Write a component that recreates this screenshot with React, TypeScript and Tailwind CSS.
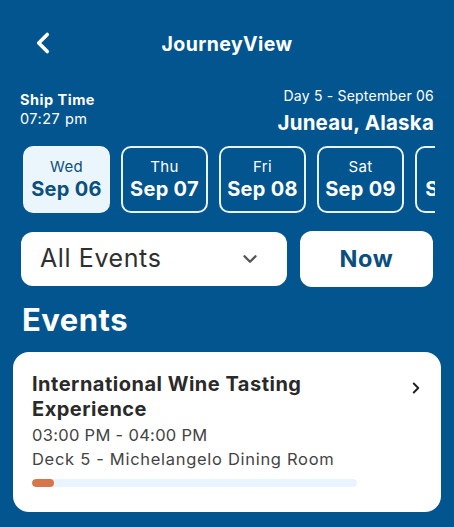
import { ChevronLeft, ChevronDown, ChevronRight } from "lucide-react";

const days = [
  { id: 1, day: "Wed", date: "Sep 06", active: true },
  { id: 2, day: "Thu", date: "Sep 07", active: false },
  { id: 3, day: "Fri", date: "Sep 08", active: false },
  { id: 4, day: "Sat", date: "Sep 09", active: false },
  { id: 5, day: "Sun", date: "Sep 10", active: false },
];

function App() {
  return (
    <div className="w-[454px] h-[527px] overflow-hidden bg-[#03558f] text-white font-['Inter',sans-serif]">
      {/* header */}
      <div className="relative flex items-center justify-center h-[90px]">
        <ChevronLeft className="absolute left-[26px] top-[26px] w-[34px] h-[34px]" strokeWidth={2.6} />
        <h1 className="text-[19.5px] font-bold tracking-[0.4px]">JourneyView</h1>
      </div>

      <div className="flex justify-between items-start px-5 mt-[-3px]">
        <div className="flex flex-col leading-[19px] mt-[3px]">
          <span className="text-[14.5px] font-bold tracking-[0.5px]">Ship Time</span>
          <span className="text-[14.5px] tracking-[0.5px]">07:27 pm</span>
        </div>
        <div className="flex flex-col items-end">
          <span className="text-[14px] leading-[17px] tracking-[0.2px]">Day 5 - September 06</span>
          <span className="text-[20.5px] font-bold leading-[28px] tracking-[0.2px] mt-[5px]">Juneau, Alaska</span>
        </div>
      </div>

      <div className="flex gap-[11px] pl-[23px] mt-[9px] overflow-hidden w-[435px]">
        {days.map((d) => (
          <div
            key={d.id}
            className={
              d.active
                ? "shrink-0 w-[87px] h-[67px] rounded-[10px] bg-[#eaf5fc] text-[#0b4f7f] flex flex-col items-center justify-center"
                : "shrink-0 w-[87px] h-[67px] rounded-[10px] border-2 border-[#e8f2fa] text-white flex flex-col items-center justify-center"
            }
          >
            <span className="text-[15px] leading-[20px] tracking-[0.3px]">{d.day}</span>
            <span className="text-[20px] font-bold leading-[25px] tracking-[0.3px]">{d.date}</span>
          </div>
        ))}
      </div>

      <div className="flex gap-[13px] px-[21px] mt-[19px]">
        <div className="flex items-center justify-between w-[266px] h-[54px] bg-white rounded-[12px] pl-[19px] pr-[26px]">
          <span className="text-[25px] text-[#2f2f2f] tracking-[0.6px]">All Events</span>
          <ChevronDown className="w-[22px] h-[22px] text-[#555]" strokeWidth={2.6} />
        </div>
        <div className="flex items-center justify-center w-[133px] h-[56px] bg-white rounded-[12px] mt-[-1px]">
          <span className="text-[23.5px] font-bold text-[#0b4f7f] tracking-[0.6px]">Now</span>
        </div>
      </div>

      <h2 className="px-[22px] mt-[13px] text-[31px] font-bold leading-[40px] tracking-[0.5px]">Events</h2>

      <div className="mx-[13px] mt-[12px] bg-white rounded-[16px] h-[160px] px-[19px] pt-[20px] text-[#2a2a2a] flex">
        <div className="flex-1">
          <h3 className="text-[20px] font-bold leading-[25px] w-[340px] tracking-[0.5px]">
            International Wine Tasting Experience
          </h3>
          <div className="text-[16.5px] text-[#444] leading-[24px] mt-[1px] tracking-[0.3px]">03:00 PM - 04:00 PM</div>
          <div className="text-[16.5px] text-[#444] leading-[24px] tracking-[0.7px]">Deck 5 - Michelangelo Dining Room</div>
          <div className="mt-[8px] w-[325px] h-[8px] rounded-full bg-[#eaf4fc] overflow-hidden">
            <div className="w-[22px] h-full rounded-full bg-[#d6764a]" />
          </div>
        </div>
        <ChevronRight className="w-[18px] h-[18px] mt-[7px] text-[#222] mr-[-3px]" strokeWidth={2.6} />
      </div>
    </div>
  );
}

export default App;
